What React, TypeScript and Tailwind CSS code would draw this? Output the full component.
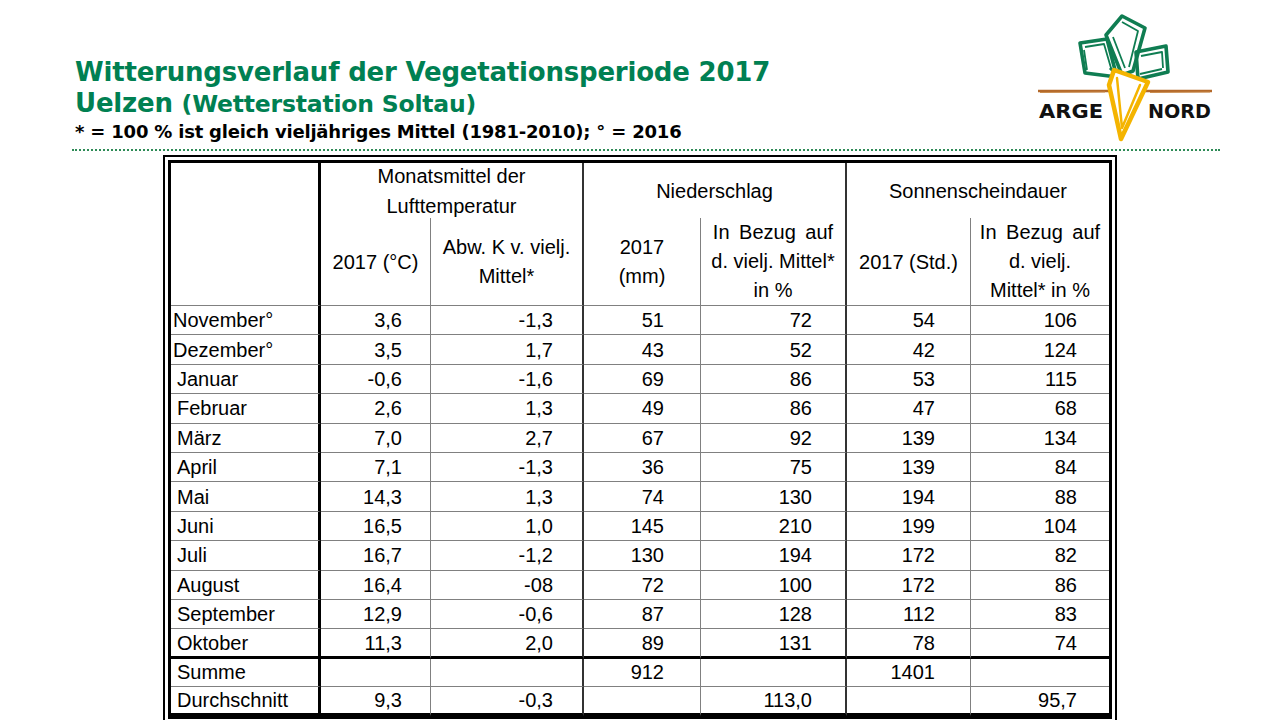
import React from "react";

type Row = { label: string; tight?: boolean; v: string[]; h: string; bottom: string };

const months: [string, string[], boolean?][] = [
  ["November°", ["3,6", "-1,3", "51", "72", "54", "106"], true],
  ["Dezember°", ["3,5", "1,7", "43", "52", "42", "124"], true],
  ["Januar", ["-0,6", "-1,6", "69", "86", "53", "115"]],
  ["Februar", ["2,6", "1,3", "49", "86", "47", "68"]],
  ["März", ["7,0", "2,7", "67", "92", "139", "134"]],
  ["April", ["7,1", "-1,3", "36", "75", "139", "84"]],
  ["Mai", ["14,3", "1,3", "74", "130", "194", "88"]],
  ["Juni", ["16,5", "1,0", "145", "210", "199", "104"]],
  ["Juli", ["16,7", "-1,2", "130", "194", "172", "82"]],
  ["August", ["16,4", "-08", "72", "100", "172", "86"]],
  ["September", ["12,9", "-0,6", "87", "128", "112", "83"]],
  ["Oktober", ["11,3", "2,0", "89", "131", "78", "74"]],
];

const rows: Row[] = [
  ...months.map(([label, v, tight], i) => ({
    label,
    v,
    tight,
    h: "h-[29.4px]",
    bottom:
      i === months.length - 1
        ? "border-b-[3px] border-b-black"
        : "border-b border-b-[#808080]",
  })),
  { label: "Summe", v: ["", "", "912", "", "1401", ""], h: "h-[28px]", bottom: "border-b border-b-[#808080]" },
  { label: "Durchschnitt", v: ["9,3", "-0,3", "", "113,0", "", "95,7"], h: "h-[29px]", bottom: "border-b-[3px] border-b-black" },
];

// right border + padding per value column
const valueCols = [
  "border-r border-r-[#808080] pr-[28px]",
  "border-r-2 border-r-[#333] pr-[29px]",
  "border-r border-r-[#808080] pr-[36px]",
  "border-r-2 border-r-[#333] pr-[33px]",
  "border-r border-r-[#808080] pr-[35px]",
  "pr-[32px]",
];

function Logo() {
  return (
    <svg width="200" height="140" viewBox="0 0 200 140" className="mt-[10px] mr-[50px] ml-auto shrink-0">
      {/* ground line */}
      <path d="M8 81 L182 81" stroke="#b4692a" strokeWidth="2.5" />
      <path d="M10 82.5 L75 82 M120 82.5 L180 82" stroke="#c98a4a" strokeWidth="1" />
      {/* leaves */}
      <g fill="none" stroke="#0f7d52" strokeWidth="3.6" strokeLinejoin="round">
        <path d="M50 33 L77 29 L85 60 L87 67 L55 63 Z" />
        <path d="M55 37 L74 34 L81 58 M57 60 L54 40" strokeWidth="1.8" />
        <path d="M92 6 L115 18 L103 61 L92 65 L76 25 Z" />
        <path d="M92 12 L108 21 L99 57 M83 27 L95 58" strokeWidth="1.8" />
        <path d="M106 42 L136 36 L138 62 L108 69 Z" />
        <path d="M111 46 L132 42 L133 58 M110 64 L132 59" strokeWidth="1.8" />
        <path d="M80 58 L88 66 M92 62 L95 68 M104 66 L100 71" strokeWidth="3" />
      </g>
      {/* carrot */}
      <g fill="none" stroke="#f4b400" strokeWidth="4.5" strokeLinejoin="round" strokeLinecap="round">
        <path d="M84 60 L118 72 L91 129 L79 75 Z" fill="#fff" />
        <path d="M87 68 L92 118 L110 75" strokeWidth="2.5" />
      </g>
      <text
        x="9"
        y="108"
        fontFamily="'DejaVu Sans', sans-serif"
        fontWeight="700"
        fontSize="20"
        textLength="64"
        lengthAdjust="spacingAndGlyphs"
        fill="#111"
      >
        ARGE
      </text>
      <text
        x="118"
        y="108"
        fontFamily="'DejaVu Sans', sans-serif"
        fontWeight="700"
        fontSize="20"
        textLength="63"
        lengthAdjust="spacingAndGlyphs"
        fill="#111"
      >
        NORD
      </text>
    </svg>
  );
}

export default function App() {
  return (
    <div className="relative h-[720px] w-[1280px] overflow-hidden bg-white font-['Liberation_Sans',Arial,sans-serif] text-black">
      <header className="flex h-[149px] items-start">
        <div className="pl-[75px] pt-[57px] font-['DejaVu_Sans',sans-serif]">
          <h1 className="text-[26px] leading-[31px] font-bold tracking-[-0.2px] text-[#008052]">
            Witterungsverlauf der Vegetationsperiode 2017
          </h1>
          <h2 className="text-[26px] leading-[31px] font-bold tracking-[-0.2px] text-[#008052]">
            Uelzen <span className="text-[23.5px]">(Wetterstation Soltau)</span>
          </h2>
          <p className="text-[18px] leading-[24px] font-bold tracking-[-0.2px]">
            * = 100 % ist gleich vieljähriges Mittel (1981-2010); ° = 2016
          </p>
        </div>
        <Logo />
      </header>

      <div className="ml-[72px] w-[1148px] border-t-2 border-dotted border-[#2e8b57]" />

      <div className="mt-[4px] ml-[163px] w-[954px] border-2 border-black p-[3px]">
        <div className="grid grid-cols-[150px_110px_153px_117px_146px_124px_138px] border-[3px] border-black text-[20px]">
          {/* header */}
          <div className="row-span-2 border-r-[3px] border-b border-r-black border-b-[#808080]" />
          <div className="col-span-2 flex h-[55px] flex-col items-center justify-center border-r-2 border-r-[#333] leading-[30px]">
            <span>Monatsmittel der</span>
            <span>Lufttemperatur</span>
          </div>
          <div className="col-span-2 flex h-[55px] items-center justify-center border-r-2 border-r-[#333]">
            Niederschlag
          </div>
          <div className="col-span-2 flex h-[55px] items-center justify-center">Sonnenscheindauer</div>

          <div className="flex h-[88px] items-center justify-center border-r border-b border-r-[#808080] border-b-[#808080] text-center">
            2017 (°C)
          </div>
          <div className="flex h-[88px] flex-col items-center justify-center border-r-2 border-b border-r-[#333] border-b-[#808080] leading-[29px]">
            <span>Abw. K v. vielj.</span>
            <span>Mittel*</span>
          </div>
          <div className="flex h-[88px] flex-col items-center justify-center border-r border-b border-r-[#808080] border-b-[#808080] leading-[29px]">
            <span>2017</span>
            <span>(mm)</span>
          </div>
          <div className="flex h-[88px] flex-col items-center justify-center border-r-2 border-b border-r-[#333] border-b-[#808080] leading-[29px]">
            <span className="[word-spacing:4px]">In Bezug auf</span>
            <span>d. vielj. Mittel*</span>
            <span>in %</span>
          </div>
          <div className="flex h-[88px] items-center justify-center border-r border-b border-r-[#808080] border-b-[#808080]">
            2017 (Std.)
          </div>
          <div className="flex h-[88px] flex-col items-center justify-center border-b border-b-[#808080] leading-[29px]">
            <span className="[word-spacing:4px]">In Bezug auf</span>
            <span>d. vielj.</span>
            <span>Mittel* in %</span>
          </div>

          {/* body */}
          {rows.map((r) => (
            <React.Fragment key={r.label}>
              <div
                className={`flex items-center border-r-[3px] border-r-black ${r.h} ${r.bottom} ${
                  r.tight ? "pl-[2px]" : "pl-[6px]"
                }`}
              >
                {r.label}
              </div>
              {r.v.map((val, j) => (
                <div key={j} className={`flex items-center justify-end ${r.h} ${r.bottom} ${valueCols[j]}`}>
                  {val}
                </div>
              ))}
            </React.Fragment>
          ))}
        </div>
      </div>
    </div>
  );
}
